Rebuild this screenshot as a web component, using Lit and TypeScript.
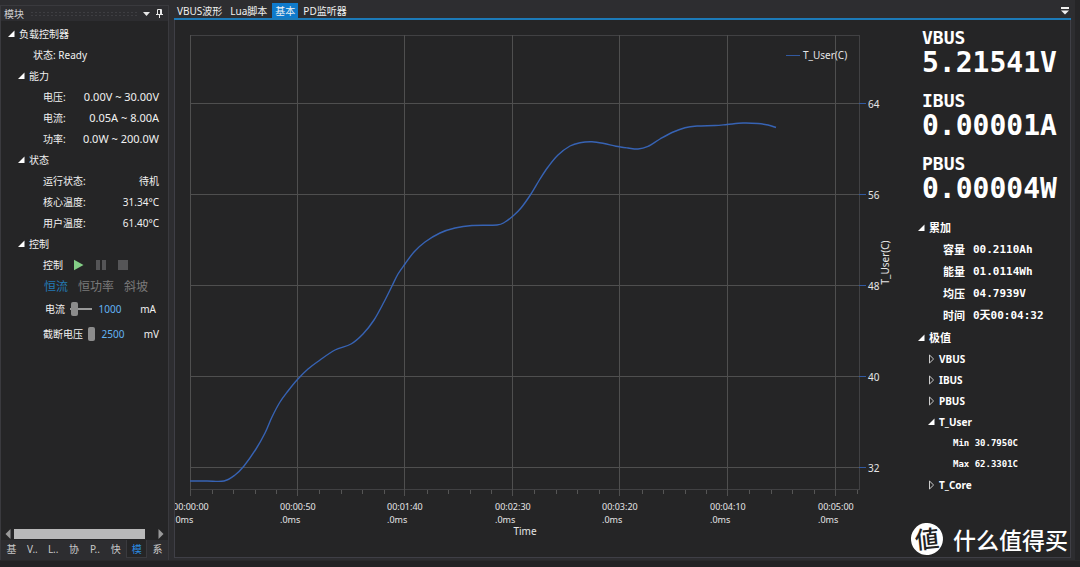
import { LitElement, html, svg, css, nothing } from "lit";
import { customElement, property, state } from "lit/decorators.js";
import { classMap } from "lit/directives/class-map.js";

type Point = [number, number];

const CURVE: Point[] = [
  [190, 481], [207, 481], [224, 481], [235, 475], [244, 466], [256, 449], [265, 433], [272, 417],
  [280, 402], [288, 391], [297, 380], [308, 369], [320, 360], [335, 350], [351, 344], [363, 334],
  [374, 320], [384, 302], [392, 286], [398, 274], [405, 264], [414, 252], [425, 242], [440, 233],
  [455, 228], [472, 225.5], [497, 225], [505, 222], [513, 216], [521, 208], [531, 194], [540, 179],
  [548, 167], [558, 155], [570, 146], [580, 142.7], [592, 141.8], [604, 143.5], [616, 146.3],
  [628, 148], [638, 149], [648, 146.3], [660, 139], [672, 132.5], [685, 127.7], [697, 126],
  [715, 125.5], [727, 124.5], [743, 123], [758, 123.5], [768, 125], [776, 127.5],
];

/* Catmull-Rom spline through the samples, written as cubic segments. */
function spline(p: Point[]): string {
  let d = `M${p[0][0]} ${p[0][1]}`;
  for (let i = 0; i < p.length - 1; i++) {
    const a = p[Math.max(0, i - 1)], b = p[i], c = p[i + 1], e = p[Math.min(p.length - 1, i + 2)];
    d += `C${b[0] + (c[0] - a[0]) / 6} ${b[1] + (c[1] - a[1]) / 6} ${c[0] - (e[0] - b[0]) / 6} ${c[1] - (e[1] - b[1]) / 6} ${c[0]} ${c[1]}`;
  }
  return d;
}

const X_TICKS = [
  { x: 190.5, label: "00:00:00" },
  { x: 297.5, label: "00:00:50" },
  { x: 404.5, label: "00:01:40" },
  { x: 512.5, label: "00:02:30" },
  { x: 619.5, label: "00:03:20" },
  { x: 727.5, label: "00:04:10" },
  { x: 835.5, label: "00:05:00" },
];
const Y_TICKS = [64, 56, 48, 40, 32];

@customElement("temp-chart")
export class TempChart extends LitElement {
  static styles = css`
    :host { display: block; min-width: 0; min-height: 0; overflow: hidden; }
    .chart { display: block; width: 100%; height: 100%; }
    .frame { fill: none; stroke: #414143; }
    .grid { stroke: #4f4f4f; }
    .minor { stroke: #555; }
    .mark { stroke: #32599f; }
    .line { fill: none; stroke: #3763b4; stroke-width: 1.4; }
    .label { fill: #e6e6e6; font: 10px "Noto Sans", "Noto Sans CJK SC", sans-serif; }
    .time { font-size: 9px; }
  `;

  render() {
    const minors: number[] = [];
    for (let i = 1; i <= 31; i++) if (i % 5) minors.push(Math.round(190 + i * 21.5) + 0.5);
    return html`
      <svg class="chart" viewBox="175 20 736 537" preserveAspectRatio="xMinYMin meet" role="img" aria-label="T_User(C)">
        <rect class="frame" x="190.5" y="35.5" width="669" height="454"></rect>
        ${Y_TICKS.map((v, i) => {
          const y = 103.5 + i * 91;
          return svg`<line class="grid" x1="190" x2="859" y1=${y} y2=${y}></line>
            <line class="mark" x1="859" x2="866" y1=${y} y2=${y}></line>
            <text class="label" x="868" y=${y + 4.5}>${v}</text>`;
        })}
        ${X_TICKS.map(({ x, label }) => svg`
          <line class="grid" x1=${x} x2=${x} y1="35" y2="496"></line>
          <text class="label time" x=${x - 17.5} y="509.5">${label}</text>
          <text class="label time" x=${x - 17.5} y="522.5">.0ms</text>`)}
        ${minors.map((x) => svg`<line class="minor" x1=${x} x2=${x} y1="490" y2="494"></line>`)}
        <path class="line" d=${spline(CURVE)}></path>
        <line class="mark" x1="786" x2="800" y1="55.5" y2="55.5"></line>
        <text class="label" x="803" y="59">T_User(C)</text>
        <text class="label" x="525" y="535" text-anchor="middle">Time</text>
        <text class="label" text-anchor="middle" transform="translate(888.5 262.5) rotate(-90)">T_User(C)</text>
      </svg>`;
  }
}

@customElement("tree-group")
export class TreeGroup extends LitElement {
  static styles = css`
    :host { display: block; }
    .head {
      display: flex; align-items: center; gap: 4px; width: 100%; height: var(--row, 21px);
      padding: 0; border: 0; background: none; color: inherit; font: inherit; text-align: left;
    }
    .arrow { width: 7px; height: 8px; flex: none; overflow: visible; }
    .solid { fill: #fff; }
    .hollow { fill: none; stroke: #ccc; }
    .body { padding-left: var(--indent, 10px); }
  `;
  @property() name = "";
  @property({ type: Boolean }) open = false;

  render() {
    return html`
      <button class="head" aria-expanded=${this.open} @click=${() => (this.open = !this.open)}>
        <svg class="arrow" viewBox="0 0 7 8" aria-hidden="true">
          ${this.open
            ? svg`<path class="solid" d="M6.500 .5v6.500H0z"></path>`
            : svg`<path class="hollow" d="M1.500 0v8L5.600 4z"></path>`}
        </svg>
        <span>${this.name}</span>
      </button>
      ${this.open ? html`<div class="body"><slot></slot></div>` : nothing}`;
  }
}

@customElement("app-root")
export class AppRoot extends LitElement {
  static styles = css`
    :host {
      display: flex; flex-direction: column; height: 100vh; box-sizing: border-box;
      position: relative; overflow: hidden; background: #2d2d30; color: #f1f1f1;
      font: 10px/14px "Noto Sans", "Noto Sans CJK SC", sans-serif;
    }
    * { box-sizing: border-box; }
    button, input { font: inherit; color: inherit; border: 0; padding: 0; background: none; }
    .dock { flex: 1; min-height: 0; display: flex; gap: 5px; padding-top: 5px; border-right: 5px solid #252527; }
    .status { height: 7px; background: #222224; border-top: 1px solid #29292b; }

    .side { width: 169px; flex: none; display: flex; flex-direction: column; border: 1px solid #3a3a3e; border-bottom: 0; }
    .title { height: 15px; display: flex; align-items: center; gap: 6px; padding: 0 5px 0 3px; color: #d0d0d0; flex: none; }
    .grip {
      flex: 1; height: 5px;
      background-image: radial-gradient(#3e3e42 0.5px, transparent 1px); background-size: 4px 3px;
    }
    .glyph { display: flex; }
    .tree { flex: 1; min-height: 0; background: #252526; padding: 2px 9px 0 7px; overflow: hidden; }
    .row { display: flex; align-items: center; justify-content: space-between; height: 21px; padding-left: 15px; white-space: nowrap; }
    .row.state { justify-content: flex-start; }
    .range { font-size: 11px; }
    .row.buttons { justify-content: flex-start; gap: 10px; height: 22px; }
    .act { display: flex; width: 12px; height: 12px; }
    .row.modes { justify-content: flex-start; gap: 10px; padding-left: 16px; font-size: 12px; color: #7a7a7a; }
    .mode.on { color: #2379b5; }
    .row.adjust { height: 25px; justify-content: flex-start; }
    .row.amps { padding-left: 17px; height: 24px; }
    .num { width: 32px; color: #62b3f3; text-align: center; margin-left: 2px; }
    .unit { margin-left: auto; }
    .amps .unit { padding-right: 3px; }
    .slide { appearance: none; width: 22px; height: 14px; margin: 0 0 0 5px; background: linear-gradient(#999, #999) center / 100% 2px no-repeat; }
    .slide.small { width: 7px; }
    .slide::-webkit-slider-thumb { appearance: none; width: 7px; height: 14px; border-radius: 2px; background: #8c8c8c; }
    .scroll { height: 12px; flex: none; display: flex; align-items: center; justify-content: space-between; background: #252526; padding: 0 4px; gap: 3px; }
    .rail { flex: 1; height: 10px; }
    .thumb { display: block; height: 10px; width: 93%; background: #b9b9b9; }
    .tabs { height: 18px; flex: none; display: flex; margin-bottom: 2px; color: #c8c8c8; }
    .tab { flex: 1; line-height: 16px; border: 1px solid transparent; }
    .tab.on { background: #252526; color: #2b8ce0; border-color: #3a3a3e; border-top: 0; }

    .main { flex: 1; min-width: 0; display: flex; flex-direction: column; margin-right: 4px; padding-bottom: 2px; }
    .docs { display: flex; gap: 2px; height: 16px; border-bottom: 2px solid #1c7ab8; flex: none; margin-top: -1px; }
    .doc { height: 15px; line-height: 14px; padding: 0 3px; margin-top: -1px; }
    .doc.on { background: #0f7acb; }
    .more { margin-left: auto; padding: 3px 2px 0 0; display: flex; }
    .content {
      flex: 1; min-height: 0; display: grid; grid-template-columns: minmax(0, 1fr) 159px;
      background: #252526; border: 1px solid #3f3f46; border-top: 0;
    }
    .info { padding: 7px 8px 0 7px; overflow: hidden; font-weight: 700; color: #fff; }
    .meter { margin: 0 0 13px 4px; font-family: "DejaVu Sans Mono", monospace; }
    .meter-name { font-size: 18px; line-height: 22px; }
    .meter-value { font-size: 28px; line-height: 28px; white-space: nowrap; }
    .stats { --indent: 10px; margin-top: 14px; font-size: 11px; }
    .sums { --row: 22px; }
    .stat { height: 22px; display: flex; align-items: center; gap: 8px; padding-left: 15px; white-space: nowrap; }
    .mono { font-family: "DejaVu Sans Mono", "Noto Sans CJK SC", monospace; }
    .extreme { display: flex; align-items: center; height: 21px; padding-left: 15px; font: 700 9px/14px "DejaVu Sans Mono", monospace; white-space: pre; }
    .channel { font-size: 10px; }

    .brand { position: absolute; right: 12px; bottom: 12px; display: flex; align-items: center; gap: 10px; color: #fff; font: 500 23px/32px "Noto Sans CJK SC", sans-serif; }
    .seal { width: 32px; height: 32px; border-radius: 50%; background: #fff; color: #222; text-align: center; font-size: 24px; line-height: 30px; transform: rotate(-6deg); }
  `;

  @state() private mode = "恒流";
  @state() private tab = "模";
  @state() private doc = "基本";

  private line(name: string, value: string, range = false) {
    return html`<div class="row"><span>${name}</span><span class=${classMap({ range })}>${value}</span></div>`;
  }

  private side() {
    return html`
      <aside class="side">
        <header class="title">
          <span>模块</span><span class="grip"></span>
          <button class="glyph" aria-label="菜单">
            <svg width="7" height="4" viewBox="0 0 7 4"><path d="M0 0h7L3.5 4z" fill="#e8e8e8"></path></svg>
          </button>
          <button class="glyph" aria-label="固定">
            <svg width="7" height="9" viewBox="0 0 7 9"><path d="M1.5 5V.5h4V5M4.5 .5V5M0 5.5h7M3.5 5.5V9" fill="none" stroke="#e8e8e8"></path></svg>
          </button>
        </header>
        <div class="tree">
          <tree-group name="负载控制器" open>
            <div class="row state">状态: Ready</div>
            <tree-group name="能力" open>
              ${this.line("电压:", "0.00V ~ 30.00V", true)}
              ${this.line("电流:", "0.05A ~ 8.00A", true)}
              ${this.line("功率:", "0.0W ~ 200.0W", true)}
            </tree-group>
            <tree-group name="状态" open>
              ${this.line("运行状态:", "待机")}
              ${this.line("核心温度:", "31.34°C")}
              ${this.line("用户温度:", "61.40°C")}
            </tree-group>
            <tree-group name="控制" open>
              <div class="row buttons">
                <span>控制</span>
                <button class="act" aria-label="开始"><svg viewBox="0 0 12 12"><path d="M1 .8v10.4L10.5 6z" fill="#84cf86"></path></svg></button>
                <button class="act" aria-label="暂停"><svg viewBox="0 0 12 12"><path d="M1 1h4v10H1zM7 1h4v10H7z" fill="#555557"></path></svg></button>
                <button class="act" aria-label="停止"><svg viewBox="0 0 12 12"><path d="M1 1h10v10H1z" fill="#555557"></path></svg></button>
              </div>
              <div class="row modes">
                ${["恒流", "恒功率", "斜坡"].map((m) => html`
                  <button class=${classMap({ mode: true, on: m === this.mode })} @click=${() => (this.mode = m)}>${m}</button>`)}
              </div>
              <div class="row adjust amps">
                <label for="amp">电流</label>
                <input class="slide" type="range" min="0" max="20000" value="1000" aria-label="电流">
                <input class="num" id="amp" value="1000"><span class="unit">mA</span>
              </div>
              <div class="row adjust">
                <label for="cut">截断电压</label>
                <input class="slide small" type="range" min="0" max="30000" value="2500" aria-label="截断电压">
                <input class="num" id="cut" value="2500"><span class="unit">mV</span>
              </div>
            </tree-group>
          </tree-group>
        </div>
        <div class="scroll">
          <button class="glyph" aria-label="向左"><svg width="6" height="10" viewBox="0 0 6 10"><path d="M5.500 0v10L.5 5z" fill="#999"></path></svg></button>
          <span class="rail"><span class="thumb"></span></span>
          <button class="glyph" aria-label="向右"><svg width="6" height="10" viewBox="0 0 6 10"><path d="M.5 0v10l5-5z" fill="#999"></path></svg></button>
        </div>
        <nav class="tabs">
          ${["基", "V..", "L..", "协", "P..", "快", "模", "系"].map((t) => html`
            <button class=${classMap({ tab: true, on: t === this.tab })} @click=${() => (this.tab = t)}>${t}</button>`)}
        </nav>
      </aside>`;
  }

  private meter(name: string, value: string) {
    return html`<div class="meter"><div class="meter-name">${name}</div><div class="meter-value">${value}</div></div>`;
  }

  private stat(name: string, value: string) {
    return html`<div class="stat"><span>${name}</span><span class="mono">${value}</span></div>`;
  }

  render() {
    return html`
      <div class="dock">
        ${this.side()}
        <main class="main">
          <nav class="docs">
            ${["VBUS波形", "Lua脚本", "基本", "PD监听器"].map((t) => html`
              <button class=${classMap({ doc: true, on: t === this.doc })} @click=${() => (this.doc = t)}>${t}</button>`)}
            <button class="more" aria-label="更多">
              <svg width="8" height="8" viewBox="0 0 8 8"><path d="M0 0h8v2H0zM0 3.500h8L4 7.500z" fill="#f1f1f1"></path></svg>
            </button>
          </nav>
          <div class="content">
            <temp-chart></temp-chart>
            <section class="info">
              ${this.meter("VBUS", "5.21541V")}
              ${this.meter("IBUS", "0.00001A")}
              ${this.meter("PBUS", "0.00004W")}
              <div class="stats">
                <tree-group class="sums" name="累加" open>
                  ${this.stat("容量", "00.2110Ah")}
                  ${this.stat("能量", "01.0114Wh")}
                  ${this.stat("均压", "04.7939V")}
                  ${this.stat("时间", "0天00:04:32")}
                </tree-group>
                <tree-group name="极值" open>
                  <tree-group class="channel" name="VBUS"></tree-group>
                  <tree-group class="channel" name="IBUS"></tree-group>
                  <tree-group class="channel" name="PBUS"></tree-group>
                  <tree-group class="channel" name="T_User" open>
                    <div class="extreme">Min 30.7950C</div>
                    <div class="extreme">Max 62.3301C</div>
                  </tree-group>
                  <tree-group class="channel" name="T_Core"></tree-group>
                </tree-group>
              </div>
            </section>
          </div>
        </main>
      </div>
      <div class="status"></div>
      <div class="brand"><span class="seal">値</span><span>什么值得买</span></div>`;
  }
}
